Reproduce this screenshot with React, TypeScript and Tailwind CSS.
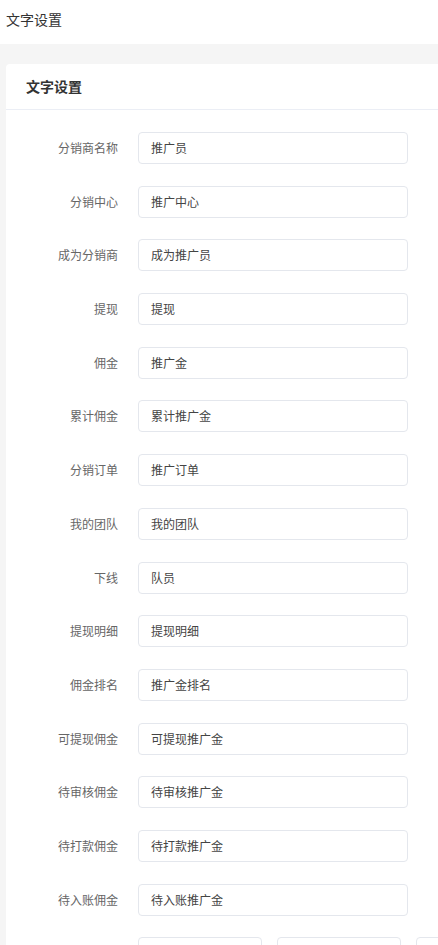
const fields: Array<{ label: string; value: string }> = [
  { label: '分销商名称', value: '推广员' },
  { label: '分销中心', value: '推广中心' },
  { label: '成为分销商', value: '成为推广员' },
  { label: '提现', value: '提现' },
  { label: '佣金', value: '推广金' },
  { label: '累计佣金', value: '累计推广金' },
  { label: '分销订单', value: '推广订单' },
  { label: '我的团队', value: '我的团队' },
  { label: '下线', value: '队员' },
  { label: '提现明细', value: '提现明细' },
  { label: '佣金排名', value: '推广金排名' },
  { label: '可提现佣金', value: '可提现推广金' },
  { label: '待审核佣金', value: '待审核推广金' },
  { label: '待打款佣金', value: '待打款推广金' },
  { label: '待入账佣金', value: '待入账推广金' },
];

const font = { fontFamily: '"Noto Sans CJK SC", "Liberation Sans", sans-serif' };

const App = () => {
  return (
    <div className="min-h-screen bg-[#f5f5f5] overflow-hidden" style={font}>
      <div className="h-[44px] bg-white flex items-center pl-[6px] pb-[6px] text-[14px] text-[#333]">
        文字设置
      </div>
      <div className="pt-[20px] pl-[6px]">
        <div className="bg-white rounded-l-[4px] min-h-[900px]">
          <div className="h-[46px] flex items-center pl-[20px] border-b border-[#ebeef5] text-[14px] font-bold text-[#333]">
            文字设置
          </div>
          <div className="pt-[22px] flex flex-col gap-[21.7px]">
            {fields.map((f) => (
              <div key={f.label} className="flex items-center">
                <div className="w-[112px] shrink-0 text-right text-[12px] text-[#666]">
                  {f.label}
                </div>
                <div className="ml-[20px] w-[270px] shrink-0 h-[32px] border border-[#e4e7ed] rounded-[4px] flex items-center pl-[12px] text-[12px] text-[#444]">
                  {f.value}
                </div>
              </div>
            ))}
            <div className="flex items-center">
              <div className="w-[112px] shrink-0" />
              <div className="ml-[20px] flex gap-[15px] shrink-0">
                <div className="w-[124px] h-[32px] border border-[#e4e7ed] rounded-[4px]" />
                <div className="w-[124px] h-[32px] border border-[#e4e7ed] rounded-[4px]" />
                <div className="w-[124px] h-[32px] border border-[#e4e7ed] rounded-[4px]" />
              </div>
            </div>
          </div>
        </div>
      </div>
    </div>
  );
};

export default App;
